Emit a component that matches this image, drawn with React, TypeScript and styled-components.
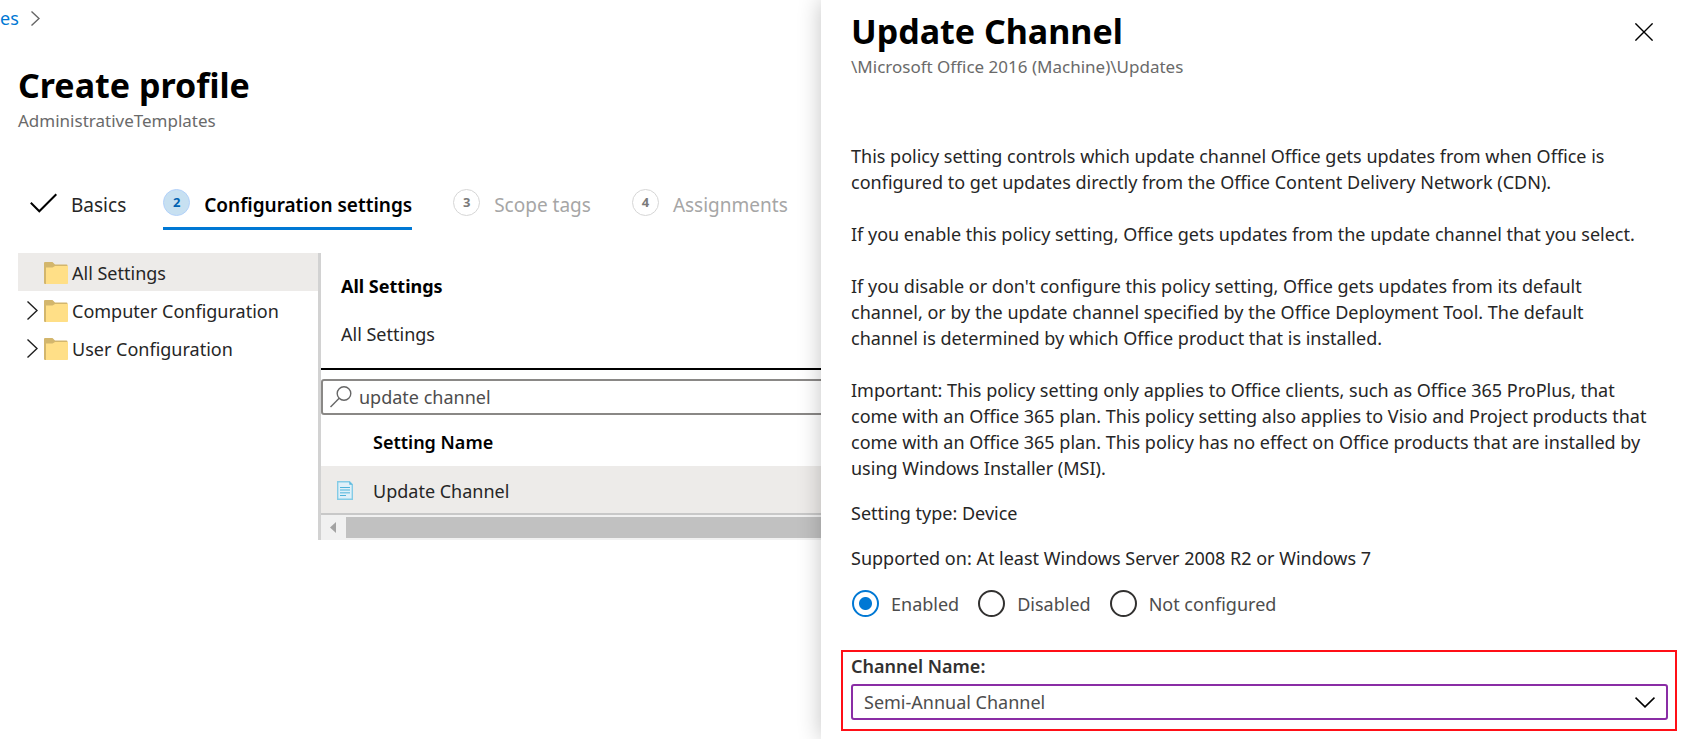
import React, { useState } from "react";
import styled, { createGlobalStyle } from "styled-components";

const GlobalStyle = createGlobalStyle`
  *, *::before, *::after { box-sizing: border-box; }
  body {
    margin: 0;
    background: #fff;
    color: #262626;
    font-family: "Segoe UI", "Noto Sans", "Open Sans", sans-serif;
    font-size: 18px;
    line-height: 26px;
  }
  h1, h2, h3, p { margin: 0; }
  button, input, select { font: inherit; color: inherit; }
`;

const Page = styled.div`
  display: grid;
  grid-template-columns: minmax(0, 821fr) minmax(0, 862fr);
  min-height: 100vh;
`;

const Main = styled.main`
  overflow: hidden;
  padding: 5px 0 0 18px;
`;

const Breadcrumb = styled.nav`
  display: flex;
  align-items: center;
  gap: 12px;
  height: 26px;
  margin-left: -18px;
`;

const CrumbLink = styled.a`
  color: #0078d4;
  text-decoration: none;
`;

const Title = styled.h1`
  color: #000;
  font-size: 34px;
  font-weight: 700;
  line-height: 44px;
`;

const Subtitle = styled.p`
  margin-top: 2px;
  color: #6a6a6a;
  font-size: 17px;
  line-height: 24px;
`;

const PageHeader = styled.header`
  margin-top: 32px;
`;

const Steps = styled.div`
  display: flex;
  gap: 37px;
  margin: 56px 0 0 12px;
  white-space: nowrap;
`;

const Step = styled.button<{ $state: "done" | "active" | "todo" }>`
  display: flex;
  align-items: flex-start;
  gap: 14px;
  margin-left: ${(p) => (p.$state === "todo" ? "4px" : "0")};
  padding: 0 0 6px;
  border: 0;
  border-bottom: 3px solid ${(p) => (p.$state === "active" ? "#0078d4" : "transparent")};
  background: none;
  color: ${(p) => (p.$state === "todo" ? "#a6a6a6" : p.$state === "active" ? "#000" : "#262626")};
  font-size: 19px;
  font-weight: ${(p) => (p.$state === "active" ? 600 : 400)};
  line-height: 32px;
  svg { margin-top: 1px; }
`;

const StepNumber = styled.span<{ $active?: boolean }>`
  width: 27px;
  height: 27px;
  border: 1px solid ${(p) => (p.$active ? "#b3d1fa" : "#d6d6d6")};
  border-radius: 50%;
  background: ${(p) => (p.$active ? "#c7e0f1" : "#fff")};
  color: ${(p) => (p.$active ? "#0062b1" : "#7a7a7a")};
  font-size: 13px;
  font-weight: 700;
  line-height: 25px;
  text-align: center;
`;

const Workspace = styled.div`
  display: flex;
  margin-top: 23px;
`;

const Tree = styled.ul`
  flex: 0 0 300px;
  margin: 0;
  padding: 0;
  list-style: none;
`;

const TreeItem = styled.button<{ $selected?: boolean }>`
  display: grid;
  grid-template-columns: 13px 24px 1fr;
  align-items: center;
  column-gap: 4px;
  width: 100%;
  height: 38px;
  padding: 1px 0 0 9px;
  border: 0;
  background: ${(p) => (p.$selected ? "#edebe9" : "transparent")};
  text-align: left;
  white-space: nowrap;
`;

const Details = styled.section`
  flex: 1 0 560px;
  border-left: 3px solid #d2d2d2;
`;

const DetailsHeader = styled.header`
  display: grid;
  gap: 22px;
  padding: 20px 20px 21px;
  border-bottom: 2px solid #000;
`;

const DetailsTitle = styled.h2`
  color: #000;
  font-size: 18px;
  font-weight: 700;
`;

const SearchBox = styled.label`
  display: flex;
  align-items: center;
  gap: 7px;
  height: 36px;
  margin-top: 9px;
  padding: 0 7px;
  border: 2px solid #8a8886;
  border-radius: 3px;
  svg { flex: none; }
`;

const SearchInput = styled.input`
  flex: 1;
  min-width: 0;
  padding: 0;
  border: 0;
  outline: 0;
  background: none;
  color: #4d4d4d;
`;

const Table = styled.table`
  width: 100%;
  border-collapse: collapse;
  text-align: left;
  th { height: 51px; padding: 3px 0 0; color: #000; font-weight: 600; }
  td { height: 47px; padding: 2px 0 0; background: #edebe9; }
  td:first-child { width: 52px; padding-left: 16px; }
  svg { display: block; }
`;

const ScrollBar = styled.div`
  display: flex;
  align-items: center;
  height: 27px;
  border-top: 2px solid #c8c8c8;
  background: #f1f1f1;
`;

const ScrollArrow = styled.button`
  display: grid;
  place-items: center;
  width: 25px;
  height: 21px;
  padding: 0 2px 0 0;
  border: 0;
  background: none;
`;

const ScrollThumb = styled.div`
  flex: 1;
  height: 21px;
  background: #c1c1c1;
`;

const Blade = styled.aside`
  z-index: 1;
  padding: 9px 15px 8px 30px;
  background: #fff;
  box-shadow: 0 0 22px rgba(0, 0, 0, 0.24);
`;

const BladeHeader = styled.header`
  display: flex;
  justify-content: space-between;
  align-items: flex-start;
`;

const CloseButton = styled.button`
  display: grid;
  place-items: center;
  width: 48px;
  height: 46px;
  padding: 0;
  border: 0;
  background: none;
`;

const BladeBody = styled.div`
  display: grid;
  gap: 19px;
  margin-top: 64px;
`;

const Description = styled.div`
  display: grid;
  gap: 26px;
`;

const RadioGroup = styled.div`
  display: flex;
  gap: 19px;
  padding-left: 1px;
`;

const RadioLabel = styled.label`
  display: flex;
  align-items: center;
  gap: 12px;
  height: 27px;
  color: #4d4d4d;
`;

const Radio = styled.input`
  appearance: none;
  width: 27px;
  height: 27px;
  margin: 0;
  border: 2px solid #323130;
  border-radius: 50%;
  &:checked {
    border-color: #0078d4;
    background: radial-gradient(circle, #0078d4 6px, transparent 7px);
  }
`;

const ChannelField = styled.div`
  margin: 33px -9px 0 -10px;
  padding: 0 7px 9px 8px;
  border: 2px solid #ff0f17;
`;

const FieldLabel = styled.label`
  display: block;
  margin-bottom: 4px;
  color: #323130;
  font-weight: 600;
  line-height: 28px;
`;

const SelectFrame = styled.div`
  display: grid;
  align-items: center;
  > * { grid-area: 1 / 1; }
  svg { justify-self: end; margin-right: 13px; pointer-events: none; }
`;

const Select = styled.select`
  appearance: none;
  width: 100%;
  height: 36px;
  padding: 0 40px 0 11px;
  border: 2px solid #8a2da5;
  border-radius: 3px;
  outline: 0;
  background: #fff;
  color: #4d4d4d;
`;

const Chevron = ({ w, h, color }: { w: number; h: number; color: string }) => (
  <svg width={w} height={h} viewBox={`0 0 ${w} ${h}`} fill="none" stroke={color} strokeWidth="1.4">
    <path d={`M0.5 0.5L${w - 1} ${h / 2}L0.5 ${h - 0.5}`} />
  </svg>
);

const CheckIcon = () => (
  <svg width="27" height="27" viewBox="0 0 27 27" fill="none" stroke="#000" strokeWidth="2">
    <path d="M0.8 12.8L9.3 21.3L26.3 4.3" />
  </svg>
);

const FolderIcon = () => (
  <svg width="24" height="22" viewBox="0 0 24 22">
    <path d="M0 1Q0 0 1 0H8.5L11 2.5H22.5Q23.5 2.5 23.5 3.5V6H2V22H1Q0 22 0 21Z" fill="#d3b66c" />
    <path d="M2 5.5H8.5L11 4H24V21.2Q24 22 23.2 22H2Z" fill="#ffdf87" />
  </svg>
);

const SearchIcon = () => (
  <svg width="22" height="22" viewBox="0 0 22 22" fill="none" stroke="#666" strokeWidth="1.4">
    <circle cx="14" cy="7.5" r="6.8" />
    <path d="M9.2 12.3L0.5 21" />
  </svg>
);

const DocumentIcon = () => (
  <svg width="16" height="19" viewBox="0 0 16 19">
    <path d="M0.7 0.7H12.5L15.3 3.5V18.3H0.7Z" fill="#dff0f9" stroke="#84cbe6" strokeWidth="1.4" />
    <path d="M12.3 0.5V3.8H15.5Z" fill="#5bb7dc" />
    <path d="M3 6.5H13M3 14.5H9" stroke="#4fb3da" strokeWidth="1.2" />
    <path d="M3 9H13M3 11.7H13" stroke="#7fc8e4" strokeWidth="1.4" />
  </svg>
);

const CloseIcon = () => (
  <svg width="18" height="18" viewBox="0 0 18 18" stroke="#000" strokeWidth="1.4">
    <path d="M0.4 0.4L17.6 17.6M17.6 0.4L0.4 17.6" />
  </svg>
);

const options = ["Enabled", "Disabled", "Not configured"];

export default function App() {
  const [choice, setChoice] = useState("Enabled");
  const [query, setQuery] = useState("update channel");

  return (
    <>
      <GlobalStyle />
      <Page>
        <Main>
          <Breadcrumb aria-label="Breadcrumb">
            <CrumbLink href="#profiles">es</CrumbLink>
            <Chevron w={9} h={15} color="#666" />
          </Breadcrumb>
          <PageHeader>
            <Title>Create profile</Title>
            <Subtitle>AdministrativeTemplates</Subtitle>
          </PageHeader>
          <Steps>
            <Step $state="done"><CheckIcon />Basics</Step>
            <Step $state="active"><StepNumber $active>2</StepNumber>Configuration settings</Step>
            <Step $state="todo"><StepNumber>3</StepNumber>Scope tags</Step>
            <Step $state="todo"><StepNumber>4</StepNumber>Assignments</Step>
          </Steps>
          <Workspace>
            <Tree>
              <li><TreeItem $selected><span /><FolderIcon />All Settings</TreeItem></li>
              <li><TreeItem><Chevron w={11} h={19} color="#1f1f1f" /><FolderIcon />Computer Configuration</TreeItem></li>
              <li><TreeItem><Chevron w={11} h={19} color="#1f1f1f" /><FolderIcon />User Configuration</TreeItem></li>
            </Tree>
            <Details>
              <DetailsHeader>
                <DetailsTitle>All Settings</DetailsTitle>
                <p>All Settings</p>
              </DetailsHeader>
              <SearchBox>
                <SearchIcon />
                <SearchInput aria-label="Search settings" value={query} onChange={(e) => setQuery(e.target.value)} />
              </SearchBox>
              <Table>
                <thead>
                  <tr><th /><th scope="col">Setting Name</th></tr>
                </thead>
                <tbody>
                  <tr><td><DocumentIcon /></td><td>Update Channel</td></tr>
                </tbody>
              </Table>
              <ScrollBar>
                <ScrollArrow aria-label="Scroll left">
                  <svg width="6" height="11" viewBox="0 0 6 11"><path d="M6 0V11L0 5.5Z" fill="#a3a3a3" /></svg>
                </ScrollArrow>
                <ScrollThumb />
              </ScrollBar>
            </Details>
          </Workspace>
        </Main>

        <Blade>
          <BladeHeader>
            <div>
              <Title as="h2">Update Channel</Title>
              <Subtitle>\Microsoft Office 2016 (Machine)\Updates</Subtitle>
            </div>
            <CloseButton aria-label="Close"><CloseIcon /></CloseButton>
          </BladeHeader>
          <BladeBody>
            <Description>
              <p>This policy setting controls which update channel Office gets updates from when Office is<br />configured to get updates directly from the Office Content Delivery Network (CDN).</p>
              <p>If you enable this policy setting, Office gets updates from the update channel that you select.</p>
              <p>If you disable or don't configure this policy setting, Office gets updates from its default<br />channel, or by the update channel specified by the Office Deployment Tool. The default<br />channel is determined by which Office product that is installed.</p>
              <p>Important: This policy setting only applies to Office clients, such as Office 365 ProPlus, that<br />come with an Office 365 plan. This policy setting also applies to Visio and Project products that<br />come with an Office 365 plan. This policy has no effect on Office products that are installed by<br />using Windows Installer (MSI).</p>
            </Description>
            <p>Setting type: Device</p>
            <p>Supported on: At least Windows Server 2008 R2 or Windows 7</p>
            <RadioGroup role="radiogroup" aria-label="State">
              {options.map((o) => (
                <RadioLabel key={o}>
                  <Radio type="radio" name="state" checked={choice === o} onChange={() => setChoice(o)} />
                  {o}
                </RadioLabel>
              ))}
            </RadioGroup>
          </BladeBody>
          <ChannelField>
            <FieldLabel htmlFor="channel">Channel Name:</FieldLabel>
            <SelectFrame>
              <Select id="channel">
                <option>Semi-Annual Channel</option>
              </Select>
              <svg width="20" height="11" viewBox="0 0 20 11" fill="none" stroke="#000" strokeWidth="1.6">
                <path d="M0.5 0.7L10 9.8L19.5 0.7" />
              </svg>
            </SelectFrame>
          </ChannelField>
        </Blade>
      </Page>
    </>
  );
}
